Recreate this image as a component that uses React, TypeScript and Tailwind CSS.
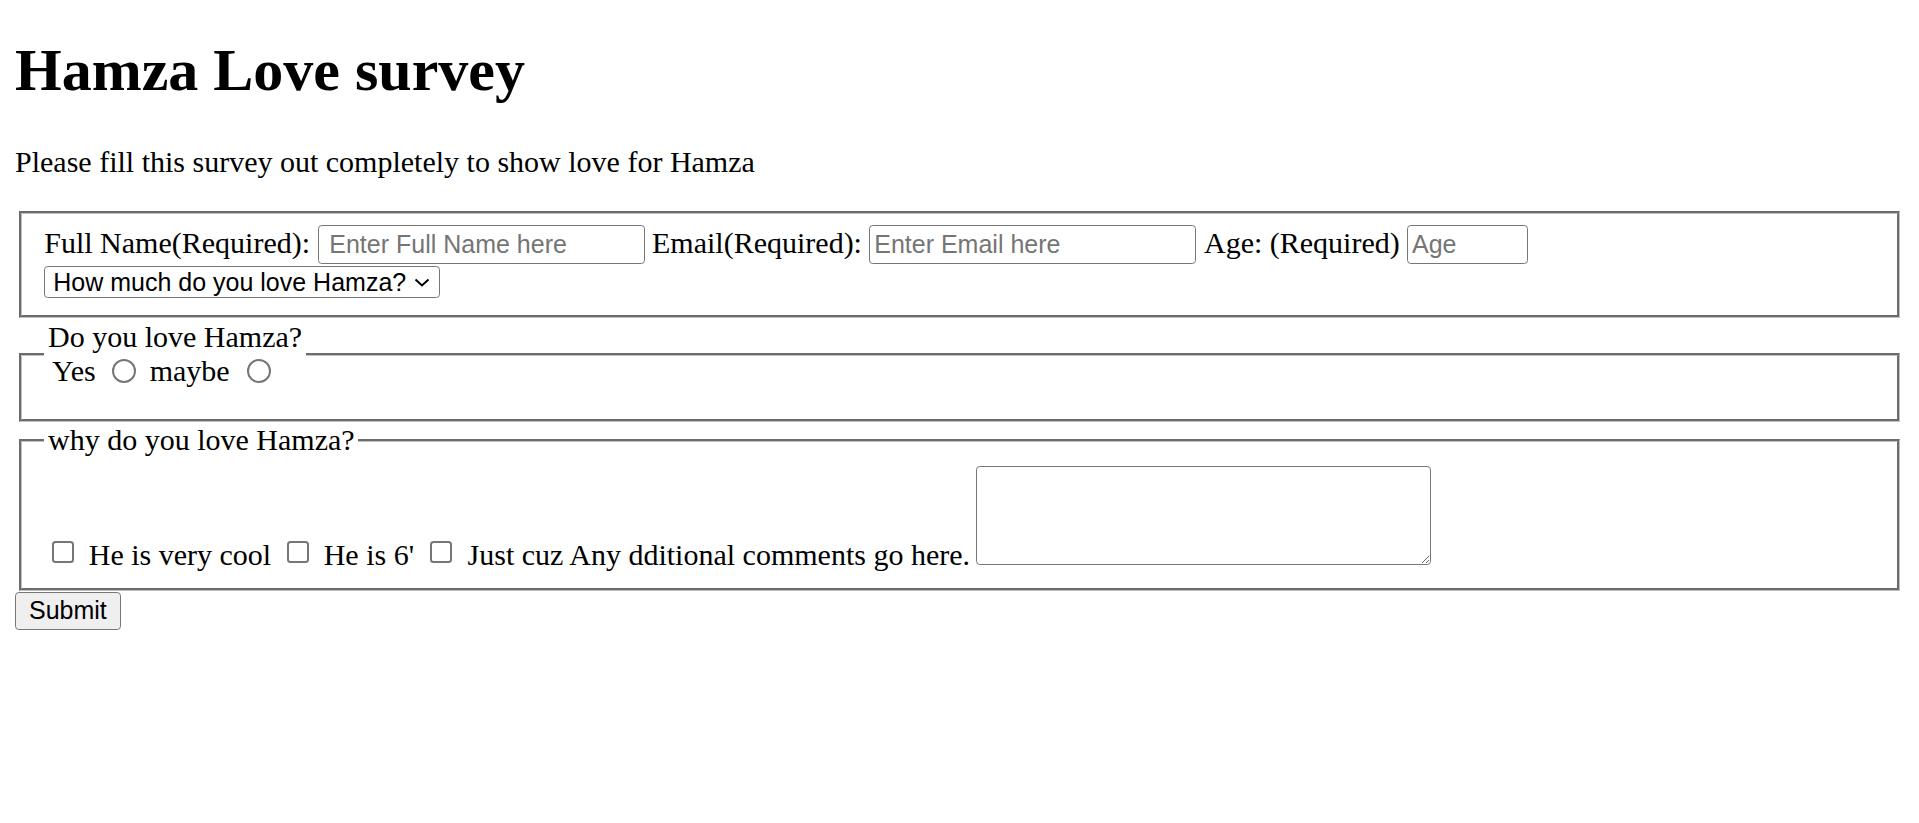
import React from "react";

const box = "border border-[#767676] rounded-[3.75px] bg-white";
const sans = "font-['Liberation_Sans',Arial,sans-serif] text-[25px] text-black";
const fieldset =
  "mx-[3.75px] border-[3px] [--tw-border-style:groove] [border-style:groove] border-[#c0c0c0] px-[22.5px] min-w-0";

function Check() {
  return (
    <input
      type="checkbox"
      className="appearance-none shrink-0 w-[22px] h-[22px] mb-[9.5px] border-2 border-[#767676] rounded-[3.5px] bg-white"
    />
  );
}

function Radio({ name }: { name: string }) {
  return (
    <input
      type="radio"
      name={name}
      className="appearance-none shrink-0 w-[24px] h-[24px] border-2 border-[#767676] rounded-full bg-white"
    />
  );
}

export default function App() {
  return (
    <div className="min-h-screen bg-white px-[15px] pt-[36px] font-['Liberation_Serif','Times_New_Roman',serif] text-[30px] leading-[1.15] text-black">
      <h1 className="text-[60px] font-bold leading-[69px]">Hamza Love survey</h1>
      <p className="mt-[40px]">Please fill this survey out completely to show love for Hamza</p>

      <form className="mt-[31.5px]" onSubmit={e => e.preventDefault()}>
        {/* Personal details */}
        <fieldset className={`${fieldset} pt-[10.5px] pb-[17px]`}>
          <div className="flex items-baseline gap-[7.5px]">
            <label htmlFor="name">Full Name(Required):</label>
            <input
              id="name"
              type="text"
              placeholder="Enter Full Name here"
              className={`${box} ${sans} w-[327px] h-[39px] pl-[10.75px] pr-[3.75px] placeholder:text-[#757575] outline-none`}
            />
            <label htmlFor="email">Email(Required):</label>
            <input
              id="email"
              type="email"
              placeholder="Enter Email here"
              className={`${box} ${sans} w-[327px] h-[39px] px-[3.75px] placeholder:text-[#757575] outline-none`}
            />
            <label htmlFor="age">Age: (Required)</label>
            <input
              id="age"
              type="number"
              placeholder="Age"
              className={`${box} ${sans} w-[121px] h-[39px] px-[3.75px] placeholder:text-[#757575] outline-none [appearance:textfield]`}
            />
          </div>
          <div className="relative mt-[2px] inline-flex">
            <select
              className={`${box} ${sans} appearance-none w-[396px] h-[31.5px] pl-[8px] pr-[30px] outline-none`}
              defaultValue=""
            >
              <option value="">How much do you love Hamza?</option>
              <option>A lot</option>
              <option>A little</option>
            </select>
            <svg
              className="pointer-events-none absolute right-[10px] top-[12px]"
              width="16"
              height="9"
              viewBox="0 0 16 9"
              fill="none"
              stroke="#000"
              strokeWidth="2"
            >
              <polyline points="1.5,1.5 8,7.5 14.5,1.5" />
            </svg>
          </div>
        </fieldset>

        {/* Love question */}
        <fieldset className={`${fieldset} mt-[1.5px] pt-[10.5px] pb-[19.5px]`}>
          <legend className="px-[3.75px]">
            <div>Do you love Hamza?</div>
            <div className="flex items-center h-[34.5px]">
              <span className="ml-[4px]">Yes</span>
              <span className="ml-[16px] flex"><Radio name="love" /></span>
              <span className="ml-[14px]">maybe</span>
              <span className="ml-[17px] flex"><Radio name="love" /></span>
            </div>
          </legend>
        </fieldset>

        {/* Reasons */}
        <fieldset className={`${fieldset} mt-[1.5px] pt-[8.5px] pb-[15.5px]`}>
          <legend className="px-[3.75px]">why do you love Hamza?</legend>
          <div className="flex items-end">
            <span className="ml-[7.5px] flex"><Check /></span>
            <span className="ml-[15px]">He is very cool</span>
            <span className="ml-[15.5px] flex"><Check /></span>
            <span className="ml-[15px]">He is 6'</span>
            <span className="ml-[16px] flex"><Check /></span>
            <span className="ml-[15.5px]">Just cuz Any dditional comments go here.</span>
            <textarea
              className={`${box} ${sans} ml-[6px] mb-[7px] w-[455px] h-[99px] shrink-0 outline-none`}
            />
          </div>
        </fieldset>

        <button
          type="submit"
          className={`${sans} mt-[1px] h-[38px] px-[13px] border border-[#767676] rounded-[3.75px] bg-[#efefef]`}
        >
          Submit
        </button>
      </form>
    </div>
  );
}
